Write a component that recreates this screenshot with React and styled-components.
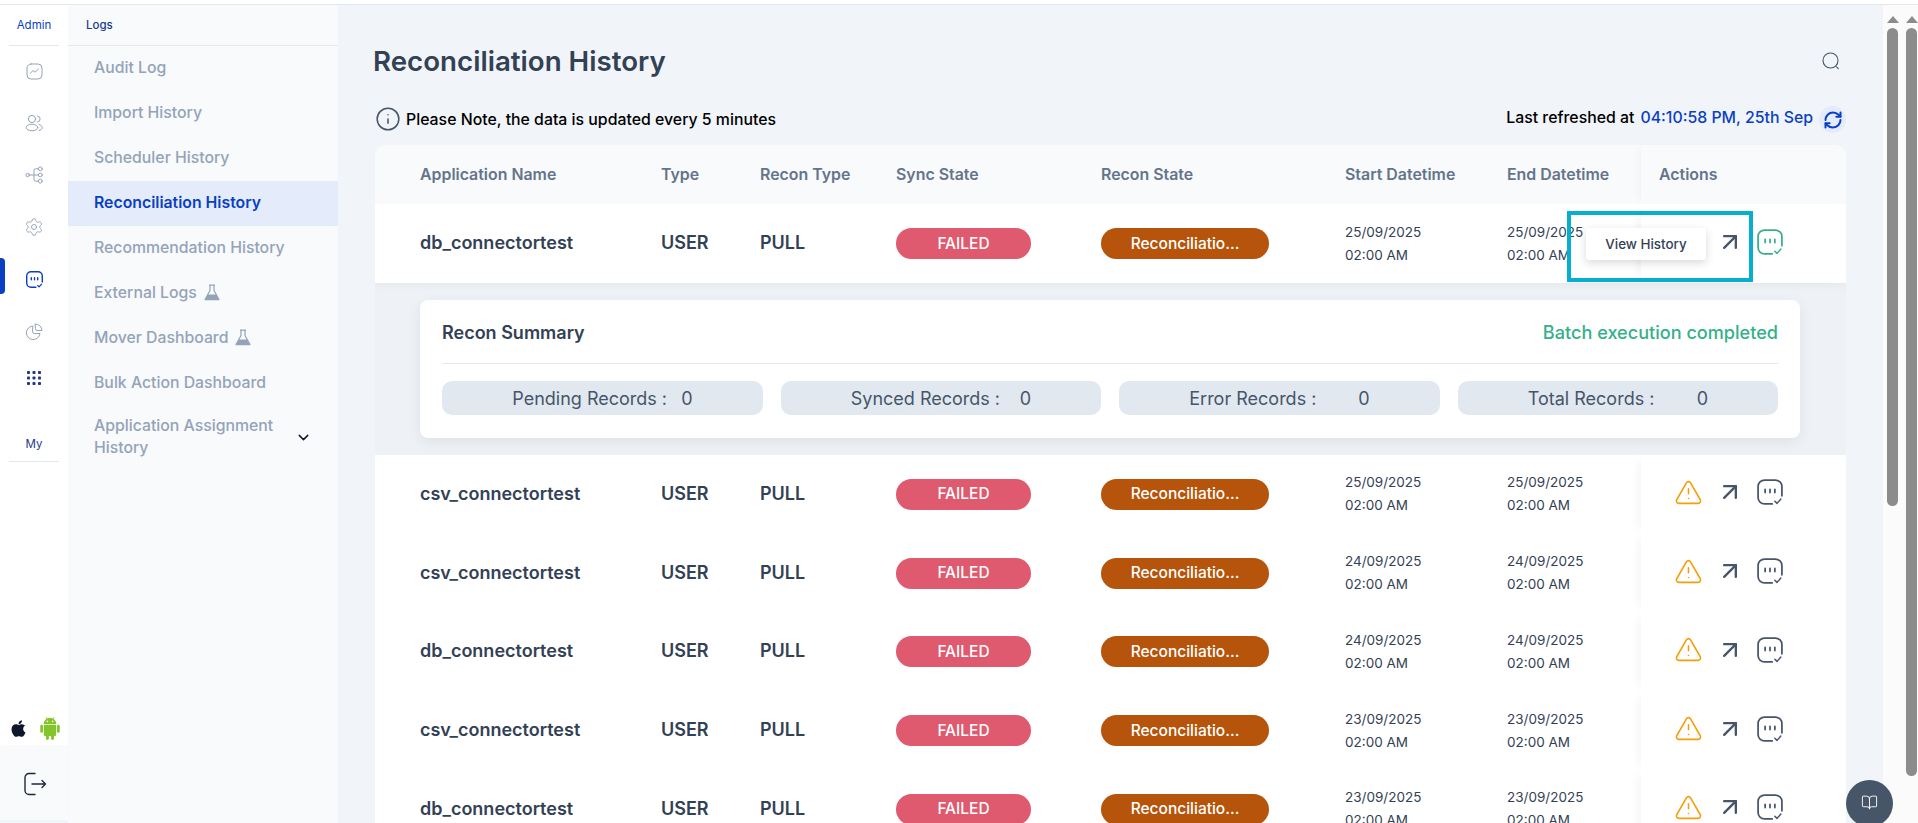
import React from "react";
import styled, { createGlobalStyle } from "styled-components";
import { FaApple } from "react-icons/fa";
import { ArrowUpRight, RefreshCw, Settings, ChevronDown, BookOpen, Info, TriangleAlert } from "lucide-react";

const Global = createGlobalStyle`
  html, body { margin: 0; padding: 0; height: 823px; overflow: hidden; background: #fff; }
  body { font-family: Inter, "Noto Sans", sans-serif; }
  * { box-sizing: border-box; }
`;

const Page = styled.div`
  width: 1918px; height: 823px; padding-top: 4px; display: flex; flex-direction: column; position: relative; overflow: hidden;
`;
const TopRule = styled.div`height: 1px; background: #e2e8f0; flex: none;`;
const Body = styled.div`flex: 1; display: flex; min-height: 0;`;

const Rail = styled.nav`
  width: 68px; flex: none; background: #fff; display: flex; flex-direction: column; position: relative;
`;
const RailHead = styled.div`
  height: ${p => p.$h}px; margin: 0 9px; border-bottom: 1px solid #e2e8f0; display: flex; align-items: center; justify-content: center;
  font-size: 11.5px; font-weight: 400; color: ${p => p.$c}; padding-top: ${p => p.$pt || 0}px; padding-bottom: ${p => p.$pb || 0}px; flex: none;
`;
const RailList = styled.div`margin-top: -1px; display: flex; flex-direction: column; flex: none;`;
const RailItem = styled.div`
  height: ${p => p.$h || 52}px; display: flex; align-items: center; justify-content: center; color: ${p => p.$c || "#94a3b8"}; position: relative; flex: none;
`;
const RailMarker = styled.span`
  position: absolute; left: 0; top: 5px; width: 5px; height: 36px; background: #0a3fc4; border-radius: 0 4px 4px 0;
`;
const RailSpacer = styled.div`flex: 1;`;
const OsRow = styled.div`
  height: 32px; display: flex; align-items: flex-start; padding: 1px 0 0 9px; gap: 12px; flex: none; background: #fff;
`;
const AppleSlot = styled.span`display: flex; margin-top: 3px; color: #0f172a;`;
const LogoutBox = styled.div`
  height: 73px; background: #f8fafc; display: flex; align-items: center; justify-content: center; padding-left: 2px; flex: none; color: #1e293b;
  box-shadow: 0 -1px 2px rgba(15,23,42,.04);
`;
const RailFoot = styled.div`height: 3px; background: #f1f5f9; flex: none;`;

const Sub = styled.aside`width: 270px; flex: none; background: #f8fafc; display: flex; flex-direction: column;`;
const SubHead = styled.div`
  height: 41px; border-bottom: 1px solid #e2e8f0; padding: 0 0 1px 18px; display: flex; align-items: center;
  font-size: 11.5px; font-weight: 500; color: #1e3a8a; flex: none;
`;
const SubItem = styled.div`
  height: 45px; padding: 0 0 3px 26px; display: flex; align-items: center; gap: 7px; flex: none;
  font-size: 15.8px; font-weight: ${p => p.$active ? 600 : 500};
  color: ${p => p.$active ? "#0a3fc4" : "#94a3b8"}; background: ${p => p.$active ? "#e4ebfb" : "transparent"};
`;
const SubMulti = styled.div`
  padding: 9px 27px 0 26px; display: flex; align-items: center; justify-content: space-between; flex: none;
  font-size: 15.8px; font-weight: 500; line-height: 22px; color: #94a3b8; width: 270px;
`;
const SubChevron = styled.span`display: flex; color: #0f172a; margin-right: -1px;`;

const Main = styled.main`
  flex: 1; min-width: 0; background: #f1f5f9; padding: 0 37px 0 37px; display: flex; flex-direction: column; overflow: hidden;
`;
const TitleRow = styled.div`
  height: 100px; display: flex; align-items: center; justify-content: space-between; flex: none; padding: 12px 6px 0 0; margin-left: -2px;
`;
const Title = styled.h1`margin: 0; font-size: 27.7px; font-weight: 600; color: #334155;`;
const SearchBtn = styled.span`display: flex; color: #475569;`;
const NoteRow = styled.div`
  height: 40px; display: flex; align-items: flex-start; justify-content: space-between; flex: none; font-size: 15.85px; font-weight: 500;
`;
const Note = styled.div`display: flex; align-items: center; gap: 5px; height: 26px; margin-top: 1px; color: #000;`;
const NoteIcon = styled.span`display: flex; color: #475569;`;
const Refreshed = styled.div`display: flex; align-items: flex-start; height: 26px; line-height: 26px; color: #000;`;
const RefreshedAt = styled.span`color: #0a3fc4; margin-left: 6px;`;
const RefreshBtn = styled.span`
  width: 27px; height: 27px; border-radius: 50%; background: #e4ebfb; display: flex; align-items: center; justify-content: center; color: #0a3fc4; margin: 1px 0 0 6px;
`;

const Table = styled.div`
  width: 1471px; flex: none; border-radius: 12px 12px 0 0; background: #fff;
`;
const cols = "241px 99px 136px 205px 244px 162px 134px 205px";
const HeadRow = styled.div`
  height: 59px; display: grid; grid-template-columns: ${cols}; padding: 0 0 0 45px; background: #f8fafc; border-radius: 12px 12px 0 0;
  font-size: 15.9px; font-weight: 600; color: #64748b; align-items: center;
`;
const HeadCell = styled.div`margin-top: -1px;`;
const ActionsHead = styled.div`
  height: 100%; display: flex; align-items: center; padding: 0 0 1px 18px; background: #f8fafc; border-radius: 0 12px 0 0;
  box-shadow: -6px 0 8px -4px rgba(15,23,42,.04);
`;
const Row = styled.div`
  height: ${p => p.$h}px; display: grid; grid-template-columns: ${cols}; padding-left: 45px; background: #fff; align-items: center; position: relative;
`;
const Name = styled.div`font-size: 18px; font-weight: 600; color: #334155; margin-top: -2px;`;
const Kind = styled.div`font-size: 18px; font-weight: 600; color: #334155; margin-top: -2px;`;
const Pill = styled.div`
  height: 31px; border-radius: 16px; background: ${p => p.$bg}; color: #fff; font-size: 15.5px; font-weight: 500;
  width: ${p => p.$w}px; display: flex; align-items: center; justify-content: center; padding-bottom: 1px;
`;
const DateCell = styled.div`font-size: 13.5px; font-weight: 400; line-height: 23px; color: #334155;`;
const ActionsCell = styled.div`
  height: 100%; display: flex; align-items: center; padding-left: 35px; background: #fff;
  box-shadow: -8px 0 10px -6px rgba(15,23,42,.05);
`;
const ActionSlot = styled.span`
  width: 24px; flex: none; display: flex; justify-content: center; margin: -4px ${p => p.$mr || 0}px 0 0; color: ${p => p.$c};
  & > svg { flex: none; }
`;
const Highlight = styled.div`
  position: absolute; left: 1192px; top: 7px; width: 186px; height: 71px; border: 4px solid #06aed0; pointer-events: none;
`;
const Tooltip = styled.div`
  position: absolute; left: 1211px; top: 24px; width: 120px; height: 32px; background: #fff; border-radius: 3px;
  box-shadow: 0 3px 8px rgba(15,23,42,.16); display: flex; align-items: center; justify-content: center;
  font-size: 13.4px; font-weight: 500; color: #334155;
`;
const Band = styled.div`
  height: 172px; padding: 17px 46px 17px 45px; background: #eef1f5;
  box-shadow: inset 0 8px 12px -8px rgba(15,23,42,.06);
`;
const Card = styled.section`
  height: 138px; background: #fff; border-radius: 8px; padding: 0 22px; box-shadow: 0 4px 14px rgba(15,23,42,.07); display: flex; flex-direction: column;
`;
const CardHead = styled.div`
  height: 64px; border-bottom: 1px solid #e2e8f0; display: flex; align-items: center; justify-content: space-between; flex: none; padding-top: 1px;
`;
const CardTitle = styled.div`font-size: 18px; font-weight: 600; color: #334155;`;
const CardStatus = styled.div`font-size: 18.1px; font-weight: 500; color: #34b08a;`;
const Stats = styled.div`display: grid; grid-template-columns: repeat(4, 1fr); gap: 18px; margin-top: 17px;`;
const Stat = styled.div`
  height: 34px; border-radius: 10px; background: #e2e8f0; display: flex; align-items: center; justify-content: center;
  font-size: 18px; color: #475569;
`;
const StatInner = styled.div`width: 180px; display: grid; grid-template-columns: 169px 11px;`;

const Scrollbars = styled.div`width: 35px; flex: none; background: #fbfbfb; display: flex; padding: 0 2px 0 4px; gap: 8px;`;
const Track = styled.div`width: 11px; display: flex; flex-direction: column; align-items: center; padding-top: 11px;`;
const TrackArrow = styled.span`
  width: 0; height: 0; border-left: 6px solid transparent; border-right: 6px solid transparent; border-bottom: 7px solid #8c8c8c; flex: none;
`;
const Thumb = styled.div`
  width: 11px; height: ${p => p.$h}px; background: #8c8c8c; border-radius: 6px; margin-top: 5px; flex: none;
`;
const Fab = styled.div`
  position: absolute; left: 1846px; top: 780px; width: 47px; height: 47px; border-radius: 50%; background: #475569; color: #fff;
  display: flex; align-items: center; justify-content: center; padding-bottom: 2px;
`;

const stroke = { fill: "none", stroke: "currentColor", strokeLinecap: "round", strokeLinejoin: "round" };
const ChartIcon = () => (<svg width="17" height="17" viewBox="0 0 17 17" {...stroke} strokeWidth="1"><rect x="1" y="1" width="15" height="15" rx="4"/><path d="M4.500 10 7 7.600l2 1.600 3.500-3.200"/></svg>);
const UsersIcon = () => (<svg width="18" height="18" viewBox="0 0 18 18" {...stroke} strokeWidth="1"><circle cx="7" cy="5" r="3.600"/><ellipse cx="7" cy="13.500" rx="5.800" ry="3.300"/><path d="M12.500 1.800a3.200 3.200 0 0 1 0 6.300M14 10.500c2 .5 3.200 1.600 3.200 3s-1.200 2.500-3.200 3"/></svg>);
const TreeIcon = () => (<svg width="18" height="18" viewBox="0 0 18 18" {...stroke} strokeWidth="1"><circle cx="2.600" cy="9" r="1.700"/><circle cx="15.300" cy="2.800" r="1.900"/><circle cx="15.300" cy="9" r="1.900"/><circle cx="15.300" cy="15.200" r="1.900"/><path d="M4.300 9h9M13.400 2.800H10.500a1.500 1.500 0 0 0-1.500 1.500v9.400a1.500 1.500 0 0 0 1.500 1.500h2.900"/></svg>);
const ChatIcon = ({ size = 26, w = 1.6 }) => (<svg width={size} height={size} viewBox="0 0 24 24" {...stroke} strokeWidth={w}><path d="M14 23H7a6 6 0 0 1-6-6V7a6 6 0 0 1 6-6h10a6 6 0 0 1 6 6v8.500"/><path d="M7.500 9.500v3M12 9.500v3M16.500 9.500v3"/><path d="M16.500 20.500l2 2 3.500-4" strokeWidth={w * 0.85}/></svg>);
const PieIcon = () => (<svg width="17" height="17" viewBox="0 0 17 17" {...stroke} strokeWidth="1"><path d="M6.500 3a6.800 6.800 0 1 0 7.500 7.500H8.500a2 2 0 0 1-2-2z"/><path d="M9.500 1a6.500 6.500 0 0 1 6.500 6.500h-5a1.500 1.500 0 0 1-1.500-1.500z"/></svg>);
const GridIcon = () => (<svg width="14" height="14" viewBox="0 0 14 14" fill="currentColor">{[0, 5.5, 11].flatMap(y => [0, 5.5, 11].map(x => <rect key={`${x}-${y}`} x={x} y={y} width="3" height="3" rx=".8"/>))}</svg>);
const LogoutIcon = () => (<svg width="24" height="24" viewBox="0 0 24 24" {...stroke} strokeWidth="1.400"><path d="M12 1.500H6A4 4 0 0 0 2 5.500v13a4 4 0 0 0 4 4h6"/><path d="M9 12h13.500M19 8.500l3.500 3.500-3.500 3.500"/></svg>);
const Flask = () => (<svg width="16" height="17" viewBox="0 0 16 17"><path d="M5 1.200h6M6 1.200v5.300L1 15.500h14L10 6.500V1.200" fill="none" stroke="#94a3b8" strokeWidth="1.200" strokeLinejoin="round"/><path d="M3.800 10.500h8.400l2.900 5.800H.9z" fill="#94a3b8"/></svg>);
const SearchIcon = () => (<svg width="18" height="18" viewBox="0 0 18 18" {...stroke} strokeWidth="1.100"><circle cx="8.500" cy="8.500" r="7.500"/><path d="M14.500 14.800l1.800 1.800"/></svg>);
const AndroidIcon = () => (
  <svg width="20" height="24" viewBox="0 0 20 24" fill="#84c52b">
    <path d="M3.800 8a6.200 6.200 0 0 1 12.400 0z"/>
    <path d="M6 1l1.500 2.500M14 1l-1.500 2.500" stroke="#84c52b" strokeWidth=".8" fill="none"/>
    <circle cx="7.400" cy="5.400" r=".8" fill="#fff"/><circle cx="12.600" cy="5.400" r=".8" fill="#fff"/>
    <path d="M3.800 8.800h12.400v9.700a1.500 1.500 0 0 1-1.500 1.500H5.300a1.500 1.500 0 0 1-1.500-1.500z"/>
    <rect x=".3" y="8.800" width="2.700" height="8" rx="1.350"/><rect x="17" y="8.800" width="2.700" height="8" rx="1.350"/>
    <rect x="6" y="18" width="2.900" height="6" rx="1.400"/><rect x="11.100" y="18" width="2.900" height="6" rx="1.400"/>
  </svg>
);

const rows = [
  ["csv_connectortest", "25/09/2025"],
  ["csv_connectortest", "24/09/2025"],
  ["db_connectortest", "24/09/2025"],
  ["csv_connectortest", "23/09/2025"],
  ["db_connectortest", "23/09/2025"],
];

const RowCells = ({ name, date, chat = "#475569" }) => (
  <>
    <Name>{name}</Name>
    <Kind>USER</Kind>
    <Kind>PULL</Kind>
    <Pill $bg="#df5a6e" $w={135}>FAILED</Pill>
    <Pill $bg="#b5540a" $w={168}>Reconciliatio...</Pill>
    <DateCell>{date}<br />02:00 AM</DateCell>
    <DateCell>{date}<br />02:00 AM</DateCell>
    <ActionsCell>
      <ActionSlot $mr={18} $c="#f59e0b"><TriangleAlert size={29} strokeWidth={1.3} /></ActionSlot>
      <ActionSlot $mr={15.5} $c="#475569"><ArrowUpRight size={28} strokeWidth={2} /></ActionSlot>
      <ActionSlot $c={chat}><ChatIcon /></ActionSlot>
    </ActionsCell>
  </>
);

const stats = ["Pending Records :", "Synced Records :", "Error Records :", "Total Records :"];
const menu = ["Audit Log", "Import History", "Scheduler History", "Reconciliation History", "Recommendation History"];
const heads = ["Application Name", "Type", "Recon Type", "Sync State", "Recon State", "Start Datetime", "End Datetime"];

export default function App() {
  return (
    <Page>
      <Global />
      <TopRule />
      <Body>
        <Rail>
          <RailHead $h={41} $pb={1} $c="#0a3fc4">Admin</RailHead>
          <RailList>
            <RailItem><ChartIcon /></RailItem>
            <RailItem><UsersIcon /></RailItem>
            <RailItem><TreeIcon /></RailItem>
            <RailItem><Settings size={20} strokeWidth={1.1} /></RailItem>
            <RailItem $c="#0a3fc4"><RailMarker /><ChatIcon size={17} w={2} /></RailItem>
            <RailItem><PieIcon /></RailItem>
            <RailItem $h={41} $c="#233a80"><GridIcon /></RailItem>
          </RailList>
          <RailHead $h={64} $pt={28} $c="#1e3a8a">My</RailHead>
          <RailSpacer />
          <OsRow>
            <AppleSlot><FaApple size={19} /></AppleSlot>
            <AndroidIcon />
          </OsRow>
          <LogoutBox><LogoutIcon /></LogoutBox>
          <RailFoot />
        </Rail>
        <Sub>
          <SubHead>Logs</SubHead>
          {menu.map(m => <SubItem key={m} $active={m === "Reconciliation History"}>{m}</SubItem>)}
          <SubItem>External Logs <Flask /></SubItem>
          <SubItem>Mover Dashboard <Flask /></SubItem>
          <SubItem>Bulk Action Dashboard</SubItem>
          <SubMulti>
            <span>Application Assignment History</span>
            <SubChevron><ChevronDown size={17} strokeWidth={2} /></SubChevron>
          </SubMulti>
        </Sub>
        <Main>
          <TitleRow>
            <Title>Reconciliation History</Title>
            <SearchBtn><SearchIcon /></SearchBtn>
          </TitleRow>
          <NoteRow>
            <Note><NoteIcon><Info size={26} strokeWidth={1.4} /></NoteIcon>Please Note, the data is updated every 5 minutes</Note>
            <Refreshed>
              Last refreshed at <RefreshedAt>04:10:58 PM, 25th Sep</RefreshedAt>
              <RefreshBtn><RefreshCw size={20} strokeWidth={2.4} /></RefreshBtn>
            </Refreshed>
          </NoteRow>
          <Table>
            <HeadRow>
              {heads.map(h => <HeadCell key={h}>{h}</HeadCell>)}
              <ActionsHead>Actions</ActionsHead>
            </HeadRow>
            <Row $h={79}>
              <RowCells name="db_connectortest" date="25/09/2025" chat="#34b08a" />
              <Highlight />
              <Tooltip>View History</Tooltip>
            </Row>
            <Band>
              <Card>
                <CardHead>
                  <CardTitle>Recon Summary</CardTitle>
                  <CardStatus>Batch execution completed</CardStatus>
                </CardHead>
                <Stats>
                  {stats.map(l => (
                    <Stat key={l}><StatInner><span>{l}</span><span>0</span></StatInner></Stat>
                  ))}
                </Stats>
              </Card>
            </Band>
            {rows.map(([n, d], i) => (
              <Row key={i} $h={78.75}><RowCells name={n} date={d} /></Row>
            ))}
          </Table>
        </Main>
        <Scrollbars>
          <Track><TrackArrow /><Thumb $h={478} /></Track>
          <Track><TrackArrow /><Thumb $h={748} /></Track>
        </Scrollbars>
      </Body>
      <Fab><BookOpen size={17} strokeWidth={1.3} /></Fab>
    </Page>
  );
}
